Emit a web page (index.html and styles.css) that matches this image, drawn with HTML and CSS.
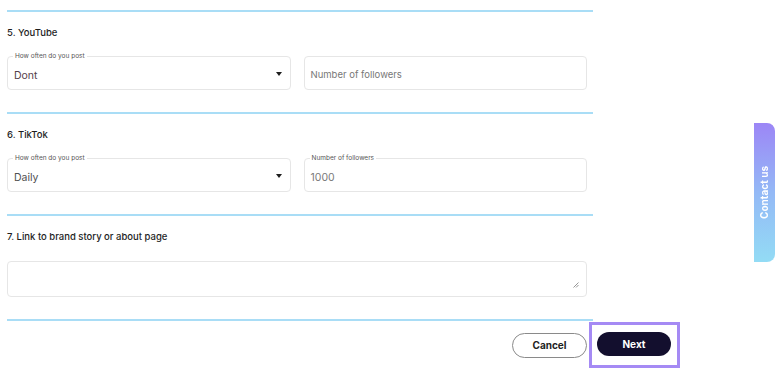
FILE: index.html
```html
<!DOCTYPE html>
<html>
<head>
<meta charset="utf-8">
<link rel="stylesheet" href="styles.css">
</head>
<body>
<div class="page">
  <div class="form">
    <div class="divider"></div>
    <section class="section">
      <h3 class="heading">5. YouTube</h3>
      <div class="row">
        <div class="field select">
          <span class="label">How often do you post</span>
          <span class="value dark">Dont</span>
          <span class="arrow"></span>
        </div>
        <div class="field">
          <span class="placeholder">Number of followers</span>
        </div>
      </div>
    </section>
    <div class="divider"></div>
    <section class="section">
      <h3 class="heading">6. TikTok</h3>
      <div class="row">
        <div class="field select">
          <span class="label">How often do you post</span>
          <span class="value">Daily</span>
          <span class="arrow"></span>
        </div>
        <div class="field">
          <span class="label">Number of followers</span>
          <span class="value grey">1000</span>
        </div>
      </div>
    </section>
    <div class="divider"></div>
    <section class="section last">
      <h3 class="heading">7. Link to brand story or about page</h3>
      <div class="textarea-wrap">
        <textarea class="textarea"></textarea>
        <svg class="grip" width="6" height="6" viewBox="0 0 6 6"><path d="M5.5 0.5 L0.5 5.5 M5.5 3 L3 5.5" stroke="#8a8a8a" stroke-width="0.9" fill="none"/></svg>
      </div>
    </section>
    <div class="divider"></div>
  </div>
  <div class="actions">
    <button class="btn cancel">Cancel</button>
    <div class="focus">
      <button class="btn next">Next</button>
    </div>
  </div>
</div>
<div class="contact">Contact us</div>
</body>
</html>
```
FILE: styles.css
```css
html, body {
  margin: 0;
  padding: 0;
  background: #ffffff;
  font-family: Inter, "Noto Sans", sans-serif;
  overflow: hidden;
}
.page {
  padding: 10px 0 0 7px;
}
.form {
  width: 586px;
}
.divider {
  height: 2px;
  background: #a9ddf6;
}
.section {
  padding: 15px 0 22px 0;
}
.heading {
  margin: 0 0 17px 0;
  font-size: 9.5px;
  line-height: 12px;
  font-weight: 500;
  color: #1e1e1e;
}
.last .heading {
  margin-bottom: 18px;
}
.row {
  display: flex;
  gap: 13px;
  width: 580px;
}
.field {
  position: relative;
  flex: 1;
  height: 34px;
  box-sizing: border-box;
  border: 1px solid #e6e6e6;
  border-radius: 4px;
  display: flex;
  align-items: center;
  padding: 0 6px;
}
.field .value {
  padding-top: 5px;
}
.label {
  position: absolute;
  left: 5px;
  top: -5px;
  padding: 0 2px;
  background: #ffffff;
  font-size: 6.5px;
  line-height: 8px;
  color: #555;
}
.value {
  font-size: 10.5px;
  font-weight: 400;
  color: #505050;
}
.value.dark {
  color: #54404a;
}
.value.grey {
  color: #7a7a7a;
}
.placeholder {
  font-size: 9.5px;
  color: #777;
  padding-top: 2px;
}
.arrow {
  position: absolute;
  right: 8px;
  top: 15px;
  width: 0;
  height: 0;
  border-left: 3.5px solid transparent;
  border-right: 3.5px solid transparent;
  border-top: 4px solid #1e1e1e;
}
.textarea-wrap {
  position: relative;
  width: 580px;
}
.textarea {
  display: block;
  width: 580px;
  height: 36px;
  box-sizing: border-box;
  border: 1px solid #e6e6e6;
  border-radius: 4px;
  margin: 0;
  padding: 4px 6px;
  resize: none;
  font-family: inherit;
  outline: none;
}
.grip {
  position: absolute;
  right: 8px;
  bottom: 9px;
}
.actions {
  width: 673px;
  display: flex;
  justify-content: flex-end;
  align-items: center;
  gap: 2px;
  margin-top: 1px;
}
.btn {
  font-family: Inter, "Noto Sans", sans-serif;
  font-size: 10px;
  font-weight: 700;
  border-radius: 13px;
  cursor: pointer;
}
.cancel {
  width: 75px;
  height: 25px;
  background: #ffffff;
  border: 1px solid #8a8a8a;
  color: #222;
}
.focus {
  border: 3px solid #a58af4;
  padding: 7px 6px 9px 5px;
}
.next {
  display: block;
  width: 74px;
  height: 24px;
  background: #130f2e;
  border: none;
  color: #ffffff;
}
.contact {
  position: fixed;
  right: 0;
  top: 123px;
  width: 21px;
  height: 139px;
  border-radius: 8px 0 0 8px;
  background: linear-gradient(0deg, #9c86f6 0%, #94b9f6 50%, #93dcf5 100%);
  color: #ffffff;
  font-size: 10px;
  font-weight: 700;
  display: flex;
  align-items: center;
  justify-content: center;
  writing-mode: vertical-rl;
  transform: rotate(180deg);
}
```
